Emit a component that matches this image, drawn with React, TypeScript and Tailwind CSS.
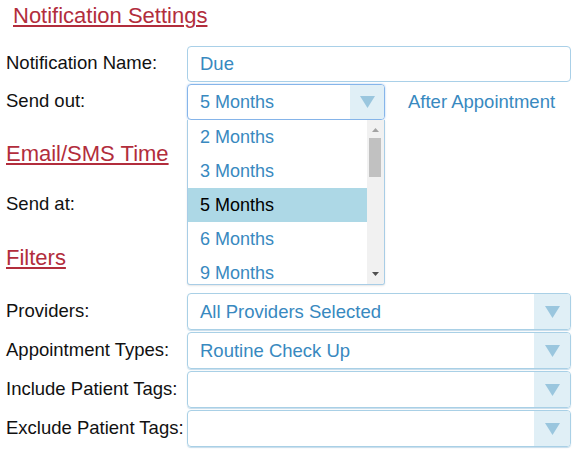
import React from "react";

const Arrow = ({ w }: { w: string }) => (
  <div className={`${w} h-full bg-[#e0eff6] rounded-r-[3px] flex items-center justify-center`}>
    <svg width="15" height="12" viewBox="0 0 15 12">
      <polygon points="0,0 15,0 7.5,12" fill="#9ac6de" />
    </svg>
  </div>
);

const FilterRow = ({ label, value, first }: { label: string; value?: string; first?: boolean }) => (
  <div className={`${first ? "mt-[23px]" : "mt-[2px]"} flex h-[37px] items-center`}>
    <div className="w-[181px] pb-[2px] text-[#111] whitespace-nowrap">{label}</div>
    <div className="h-full w-[384px] border border-[#a9d0e6] rounded-[4px] flex items-center shadow-[0_1px_1px_rgba(140,185,215,0.5)]">
      <div className="flex-1 pl-[12px] text-[#3889c0] whitespace-nowrap">{value}</div>
      <Arrow w="w-[36px]" />
    </div>
  </div>
);

export default function App() {
  const options = ["2 Months", "3 Months", "5 Months", "6 Months", "9 Months"];
  return (
    <div className="w-[578px] h-[451px] bg-white font-['Liberation_Sans',Arial,sans-serif] text-[18.5px] pl-[6px] pt-[3px] relative overflow-hidden">
      <h2 className="ml-[7px] text-[22px] leading-[25px] text-[#b22d3c] underline decoration-2 underline-offset-[2px] w-fit">
        Notification Settings
      </h2>

      <div className="mt-[18px] flex h-[36px] items-center">
        <div className="w-[181px] pb-[2px] text-[#111] whitespace-nowrap">Notification Name:</div>
        <div className="h-full w-[384px] border border-[#a9d0e8] rounded-[4px] pl-[12px] flex items-center text-[#3889c0]">
          Due
        </div>
      </div>

      <div className="mt-[2px] flex h-[36px] items-center">
        <div className="w-[181px] pb-[2px] text-[#111]">Send out:</div>
        <div className="relative w-[198px] h-full z-10">
          <div className="h-full w-full border border-[#86b5ea] rounded-[4px] flex items-center shadow-[0_0_2px_rgba(100,160,230,0.6)]">
            <div className="flex-1 pl-[12px] text-[#3889c0] text-[18px]">5 Months</div>
            <Arrow w="w-[34px]" />
          </div>
          <div className="absolute left-0 top-full w-full h-[165px] bg-white border-x border-b border-[#a8cde6] rounded-b-[3px] flex overflow-hidden shadow-[0_1px_2px_rgba(0,0,0,0.1)] text-[18px]">
            <div className="flex-1 flex flex-col">
              {options.map((o) => (
                <div
                  key={o}
                  className={`h-[34px] shrink-0 pl-[12px] flex items-center ${
                    o === "5 Months" ? "bg-[#add8e6] text-[#000]" : "text-[#3889c0]"
                  }`}
                >
                  {o}
                </div>
              ))}
            </div>
            <div className="w-[17px] bg-[#f1f1f1] relative">
              <svg className="absolute left-[5px] top-[8px]" width="7" height="4" viewBox="0 0 7 4">
                <polygon points="0,4 7,4 3.5,0" fill="#a3a3a3" />
              </svg>
              <div className="absolute left-[2px] top-[18px] w-[12px] h-[39px] bg-[#c1c1c1]" />
              <svg className="absolute left-[5px] top-[152px]" width="7" height="4" viewBox="0 0 7 4">
                <polygon points="0,0 7,0 3.5,4" fill="#505050" />
              </svg>
            </div>
          </div>
        </div>
        <div className="ml-[23px] text-[#3889c0] whitespace-nowrap">After Appointment</div>
      </div>

      <h2 className="mt-[21px] text-[22px] leading-[25px] text-[#b22d3c] underline decoration-2 underline-offset-[2px] w-fit">
        Email/SMS Time
      </h2>

      <div className="mt-[19px] flex h-[37px] items-center">
        <div className="w-[181px] text-[#111]">Send at:</div>
      </div>

      <h2 className="mt-[23px] text-[22px] leading-[25px] text-[#b22d3c] underline decoration-2 underline-offset-[2px] w-fit">
        Filters
      </h2>

      <FilterRow first label="Providers:" value="All Providers Selected" />
      <FilterRow label="Appointment Types:" value="Routine Check Up" />
      <FilterRow label="Include Patient Tags:" />
      <FilterRow label="Exclude Patient Tags:" />
    </div>
  );
}
